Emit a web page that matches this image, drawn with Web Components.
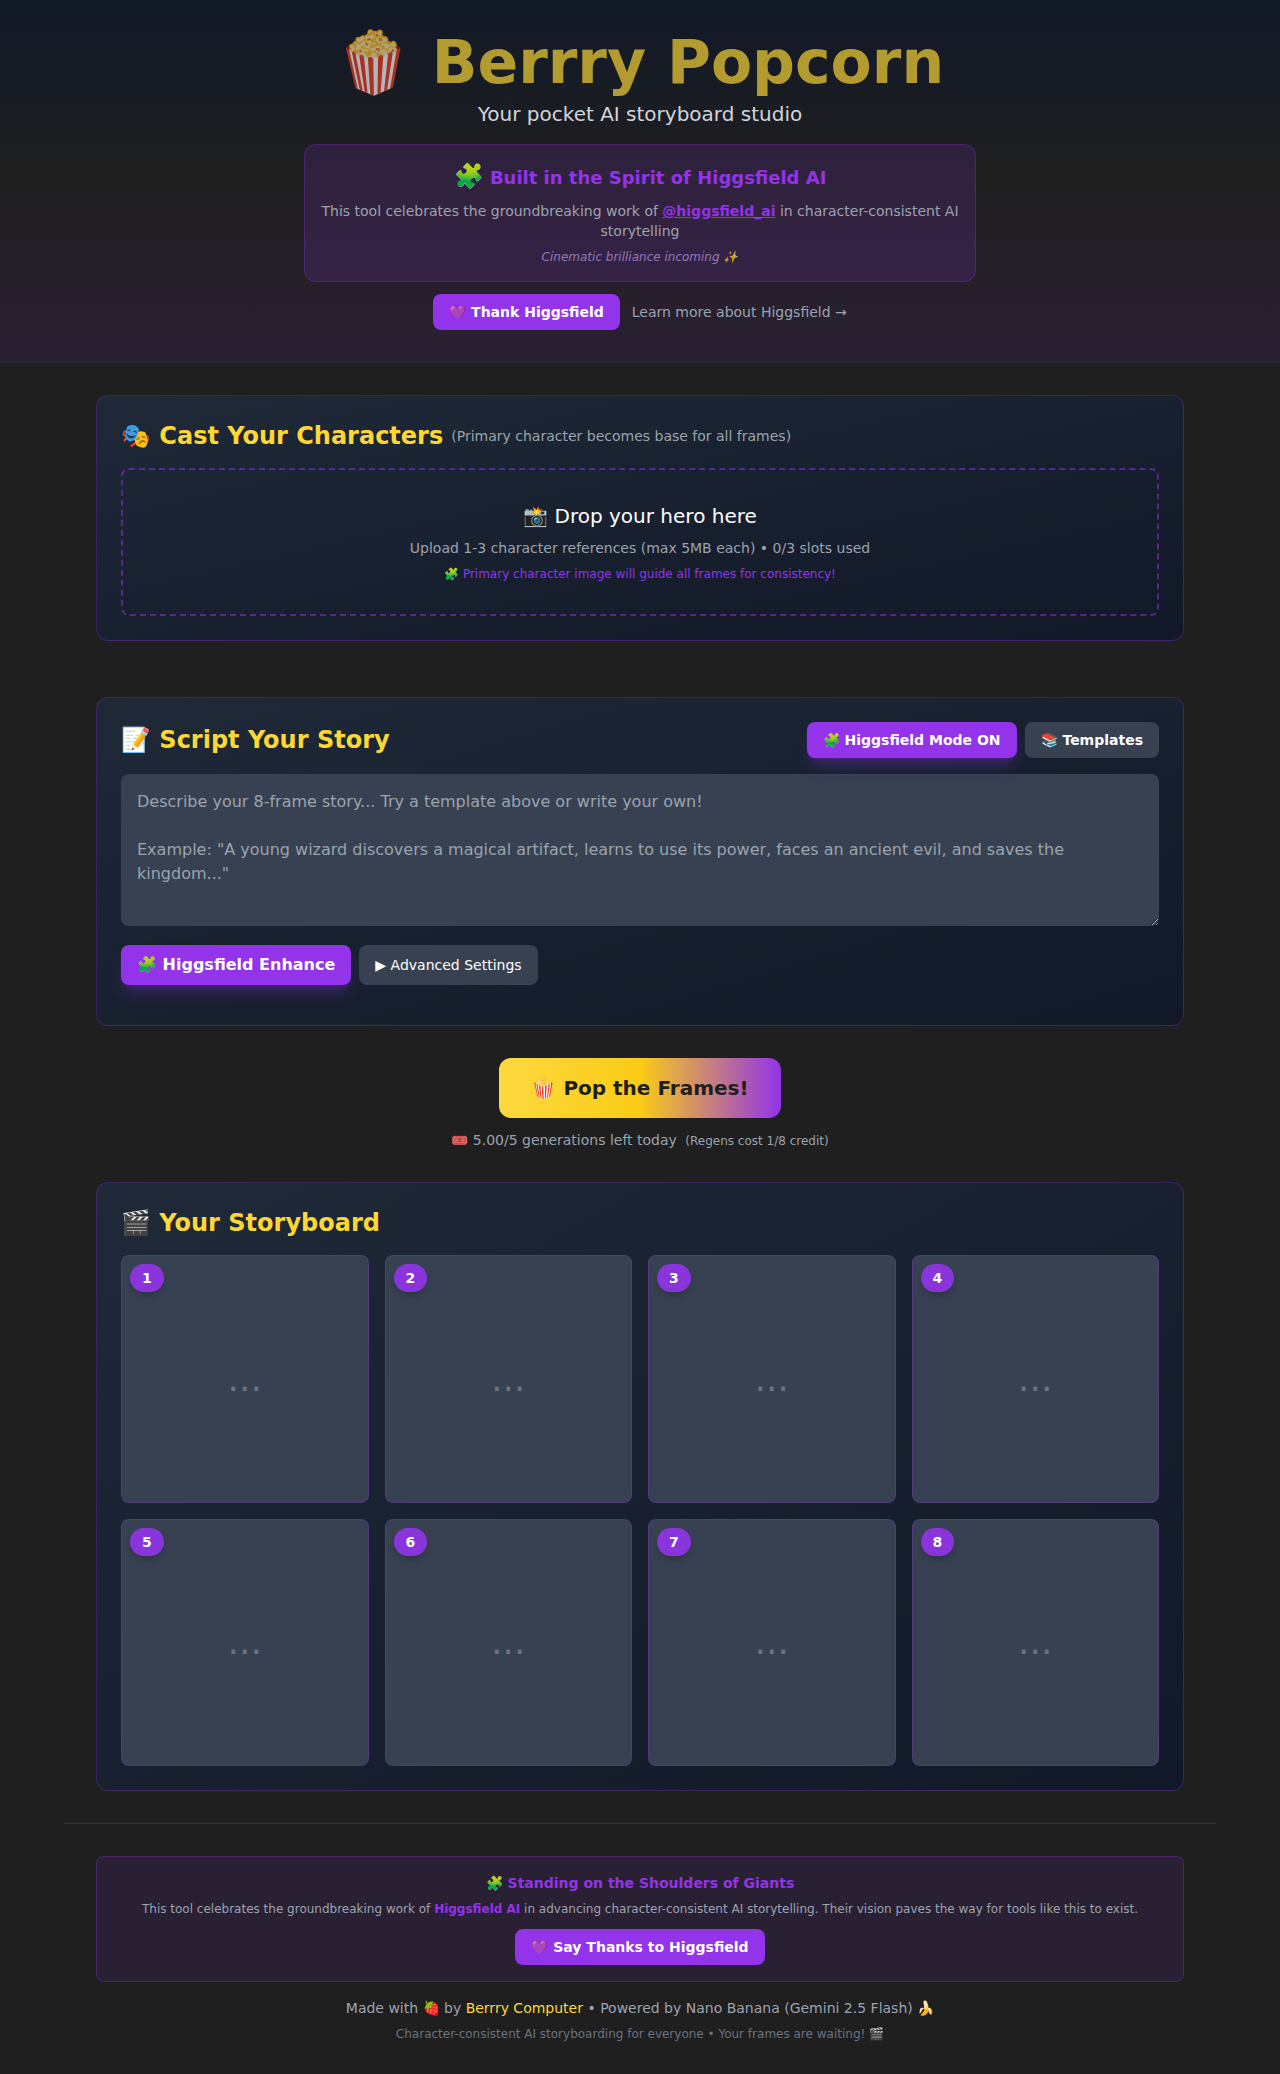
<!DOCTYPE html>
<html lang="en">
<head>
<meta charset="utf-8">
<title>Berrry Popcorn</title>
<style>
    html, body { margin: 0; background: #1f1f1f; }
    body { font-family: "DejaVu Sans", "Noto Sans CJK SC", sans-serif; color: #fff; }
    main { display: block; max-width: 1152px; margin: 32px auto 0; }
</style>
</head>
<body>
<bp-header></bp-header>
<main>
    <bp-card>
        <span slot="title">🎭 Cast Your Characters</span>
        <span slot="note">(Primary character becomes base for all frames)</span>
        <bp-dropzone></bp-dropzone>
    </bp-card>
    <bp-card style="margin-top: 56px">
        <span slot="title">📝 Script Your Story</span>
        <bp-button slot="actions" kind="glow">🧩 Higgsfield Mode ON</bp-button>
        <bp-button slot="actions" kind="gray">📚 Templates</bp-button>
        <bp-script></bp-script>
    </bp-card>
    <bp-generate></bp-generate>
    <bp-card>
        <span slot="title">🎬 Your Storyboard</span>
        <bp-storyboard></bp-storyboard>
    </bp-card>
    <bp-footer></bp-footer>
</main>

<script>
{
    const button = `
        <style>
        :host { display: inline-block; }
        .btn {
            display: block;
            padding: 8px 16px;
            border-radius: 8px;
            font-size: 14px;
            line-height: 20px;
            font-weight: 700;
            color: #fff;
            background-color: #9333ea;
            white-space: nowrap;
        }
        :host([kind="glow"]) .btn { box-shadow: 0 10px 15px -3px rgba(147, 51, 234, 0.3), 0 4px 6px -4px rgba(147, 51, 234, 0.3); }
        :host([kind="gray"]) .btn { background-color: #374151; }
        :host([size="large"]) .btn { font-size: 16px; line-height: 24px; }
        :host([weight="normal"]) .btn { font-weight: 400; font-size: 14px; }
        </style>
        <div class="btn"><slot></slot></div>
    `;

    const header = `
        <style>
        :host {
            display: block;
            height: 363px;
            box-sizing: border-box;
            padding-top: 32px;
            text-align: center;
            background: linear-gradient(to bottom, #111827, #1f1f1f 50%, #2b2033);
            border-bottom: 1px solid #1f2937;
        }
        h1 {
            margin: 0;
            font-size: 60px;
            line-height: 60px;
            font-weight: 700;
            color: #fdd835;
            opacity: 0.68;
        }
        .tagline {
            margin-top: 8px;
            font-size: 20px;
            line-height: 28px;
            color: #d1d5db;
        }
        .spirit {
            box-sizing: border-box;
            width: 672px;
            height: 138px;
            margin: 16px auto 0;
            padding: 16px;
            border: 1px solid rgba(147, 51, 234, 0.3);
            border-radius: 12px;
            background: rgba(147, 51, 234, 0.15);
        }
        .spirit h3 {
            margin: 0;
            font-size: 18px;
            line-height: 30px;
            font-weight: 700;
            color: #9333ea;
        }
        .spirit h3 .big { font-size: 24px; }
        .spirit p {
            margin: 8px 0 0;
            font-size: 14px;
            line-height: 20px;
            color: #9ca3af;
        }
        .spirit a { color: #9333ea; font-weight: 700; text-decoration: underline; }
        .spirit .soft {
            margin-top: 8px;
            font-size: 12px;
            line-height: 16px;
            font-style: italic;
            color: rgba(192, 160, 235, 0.7);
        }
        .links {
            display: flex;
            justify-content: center;
            align-items: center;
            gap: 12px;
            margin-top: 12px;
        }
        .links a { font-size: 14px; color: #9ca3af; text-decoration: none; }
        </style>
        <h1>🍿 Berrry Popcorn</h1>
        <div class="tagline">Your pocket AI storyboard studio</div>
        <div class="spirit">
            <h3><span class="big">🧩</span> Built in the Spirit of Higgsfield AI</h3>
            <p>This tool celebrates the groundbreaking work of <a href="#higgsfield">@higgsfield_ai</a> in character-consistent AI storytelling</p>
            <p class="soft">Cinematic brilliance incoming ✨</p>
        </div>
        <div class="links">
            <bp-button>💜 Thank Higgsfield</bp-button>
            <a href="#learn">Learn more about Higgsfield →</a>
        </div>
    `;

    const card = `
        <style>
        :host {
            display: block;
            margin: 0 32px;
            padding: 24px;
            border: 1px solid rgba(147, 51, 234, 0.3);
            border-radius: 12px;
            background: linear-gradient(to bottom right, #1f2937, #111827);
        }
        .top {
            display: flex;
            align-items: center;
            justify-content: space-between;
            margin-bottom: 16px;
        }
        .heading { display: flex; align-items: center; gap: 8px; }
        h2 {
            margin: 0;
            font-size: 24px;
            line-height: 32px;
            font-weight: 700;
            color: #fdd835;
        }
        .note { font-size: 14px; color: #9ca3af; }
        .actions { display: flex; gap: 8px; }
        </style>
        <div class="top">
            <div class="heading">
                <h2><slot name="title"></slot></h2>
                <span class="note"><slot name="note"></slot></span>
            </div>
            <div class="actions"><slot name="actions"></slot></div>
        </div>
        <slot></slot>
    `;

    const dropzone = `
        <style>
        :host {
            display: block;
            box-sizing: border-box;
            height: 148px;
            padding: 32px;
            border: 2px dashed rgba(147, 51, 234, 0.5);
            border-radius: 8px;
            text-align: center;
        }
        .lead { font-size: 20px; line-height: 28px; color: #fff; }
        .sub { margin-top: 8px; font-size: 14px; line-height: 20px; color: #9ca3af; }
        .hint { margin-top: 8px; font-size: 12px; line-height: 16px; color: #9333ea; }
        </style>
        <div class="lead">📸 Drop your hero here</div>
        <div class="sub">Upload 1-3 character references (max 5MB each) • 0/3 slots used</div>
        <div class="hint">🧩 Primary character image will guide all frames for consistency!</div>
    `;

    const script = `
        <style>
        :host { display: block; padding-bottom: 16px; }
        textarea {
            display: block;
            box-sizing: border-box;
            width: 100%;
            height: 152px;
            padding: 16px;
            border: 0;
            border-radius: 8px;
            outline: none;
            resize: vertical;
            font-family: inherit;
            font-size: 16px;
            line-height: 24px;
            color: #fff;
            background-color: #374151;
        }
        textarea::placeholder { color: #9ca3af; opacity: 1; }
        .row { display: flex; gap: 8px; margin-top: 19px; }
        </style>
        <textarea placeholder="Describe your 8-frame story... Try a template above or write your own!

Example: &quot;A young wizard discovers a magical artifact, learns to use its power, faces an ancient evil, and saves the kingdom...&quot;"></textarea>
        <div class="row">
            <bp-button kind="glow" size="large">🧩 Higgsfield Enhance</bp-button>
            <bp-button kind="gray" size="large" weight="normal">▶ Advanced Settings</bp-button>
        </div>
    `;

    const generate = `
        <style>
        :host {
            display: block;
            margin: 32px 0;
            text-align: center;
        }
        .pop {
            width: fit-content;
            margin: 0 auto;
            padding: 16px 32px;
            border-radius: 12px;
            font-size: 20px;
            line-height: 28px;
            font-weight: 700;
            color: #1f1f1f;
            background: linear-gradient(90deg, #fdd93f, #facc15 50%, #9333ea);
        }
        .left {
            margin-top: 12px;
            font-size: 14px;
            line-height: 20px;
            color: #9ca3af;
        }
        .left small { margin-left: 4px; font-size: 12px; line-height: 1; }
        </style>
        <div class="pop">🍿 Pop the Frames!</div>
        <div class="left">🎟️ 5.00/5 generations left today <small>(Regens cost 1/8 credit)</small></div>
    `;

    const storyboard = `
        <style>
        :host {
            display: grid;
            grid-template-columns: repeat(4, 1fr);
            gap: 16px;
        }
        </style>
        <slot></slot>
    `;

    const frame = `
        <style>
        :host {
            display: flex;
            align-items: center;
            justify-content: center;
            position: relative;
            aspect-ratio: 1;
            box-sizing: border-box;
            border: 1px solid rgba(147, 51, 234, 0.3);
            border-radius: 8px;
            background-color: #374151;
        }
        .num {
            position: absolute;
            top: 8px;
            left: 8px;
            padding: 4px 12px;
            border-radius: 9999px;
            font-size: 14px;
            line-height: 20px;
            font-weight: 700;
            color: #fff;
            background-color: rgba(147, 51, 234, 0.9);
            box-shadow: 0 4px 6px -1px rgba(0, 0, 0, 0.2);
        }
        .dots { font-size: 36px; line-height: 40px; color: #6b7280; }
        </style>
        <div class="num"><slot></slot></div>
        <div class="dots">...</div>
    `;

    const footer = `
        <style>
        :host {
            display: block;
            margin-top: 32px;
            padding-top: 32px;
            border-top: 1px solid rgba(147, 51, 234, 0.3);
            text-align: center;
        }
        .thanks {
            margin: 0 32px;
            padding: 16px;
            border: 1px solid rgba(147, 51, 234, 0.3);
            border-radius: 8px;
            background: rgba(147, 51, 234, 0.1);
        }
        h4 { margin: 0; font-size: 14px; line-height: 20px; font-weight: 700; color: #9333ea; }
        .thanks p { margin: 8px 0 12px; font-size: 12px; line-height: 16px; color: #9ca3af; }
        .thanks b { color: #9333ea; }
        .say { display: flex; justify-content: center; }
        .made { margin-top: 16px; font-size: 14px; line-height: 20px; color: #9ca3af; }
        .made a { color: #fdd835; text-decoration: none; }
        .tiny { margin-top: 8px; font-size: 12px; line-height: 16px; color: #6b7280; }
        </style>
        <div class="thanks">
            <h4>🧩 Standing on the Shoulders of Giants</h4>
            <p>This tool celebrates the groundbreaking work of <b>Higgsfield AI</b> in advancing character-consistent AI storytelling. Their vision paves the way for tools like this to exist.</p>
            <div class="say"><bp-button>💜 Say Thanks to Higgsfield</bp-button></div>
        </div>
        <div class="made">Made with 🍓 by <a href="#berrry">Berrry Computer</a> • Powered by Nano Banana (Gemini 2.5 Flash) 🍌</div>
        <div class="tiny">Character-consistent AI storyboarding for everyone • Your frames are waiting! 🎬</div>
    `;

    const define = (name, template) => {
        customElements.define(name, class extends HTMLElement {
            constructor() {
                super();
                const shadowRoot = this.attachShadow({mode: 'open'});
                shadowRoot.innerHTML = template;
            }
        });
    };

    define('bp-button', button);
    define('bp-header', header);
    define('bp-card', card);
    define('bp-dropzone', dropzone);
    define('bp-script', script);
    define('bp-generate', generate);
    define('bp-frame', frame);

    customElements.define('bp-storyboard', class extends HTMLElement {
        constructor() {
            super();
            const shadowRoot = this.attachShadow({mode: 'open'});
            shadowRoot.innerHTML = storyboard;
        }
        connectedCallback() {
            for (let i = 1; i <= 8; i++) {
                const frameEl = document.createElement('bp-frame');
                frameEl.textContent = i;
                this.appendChild(frameEl);
            }
        }
    });

    define('bp-footer', footer);
}
</script>
</body>
</html>
